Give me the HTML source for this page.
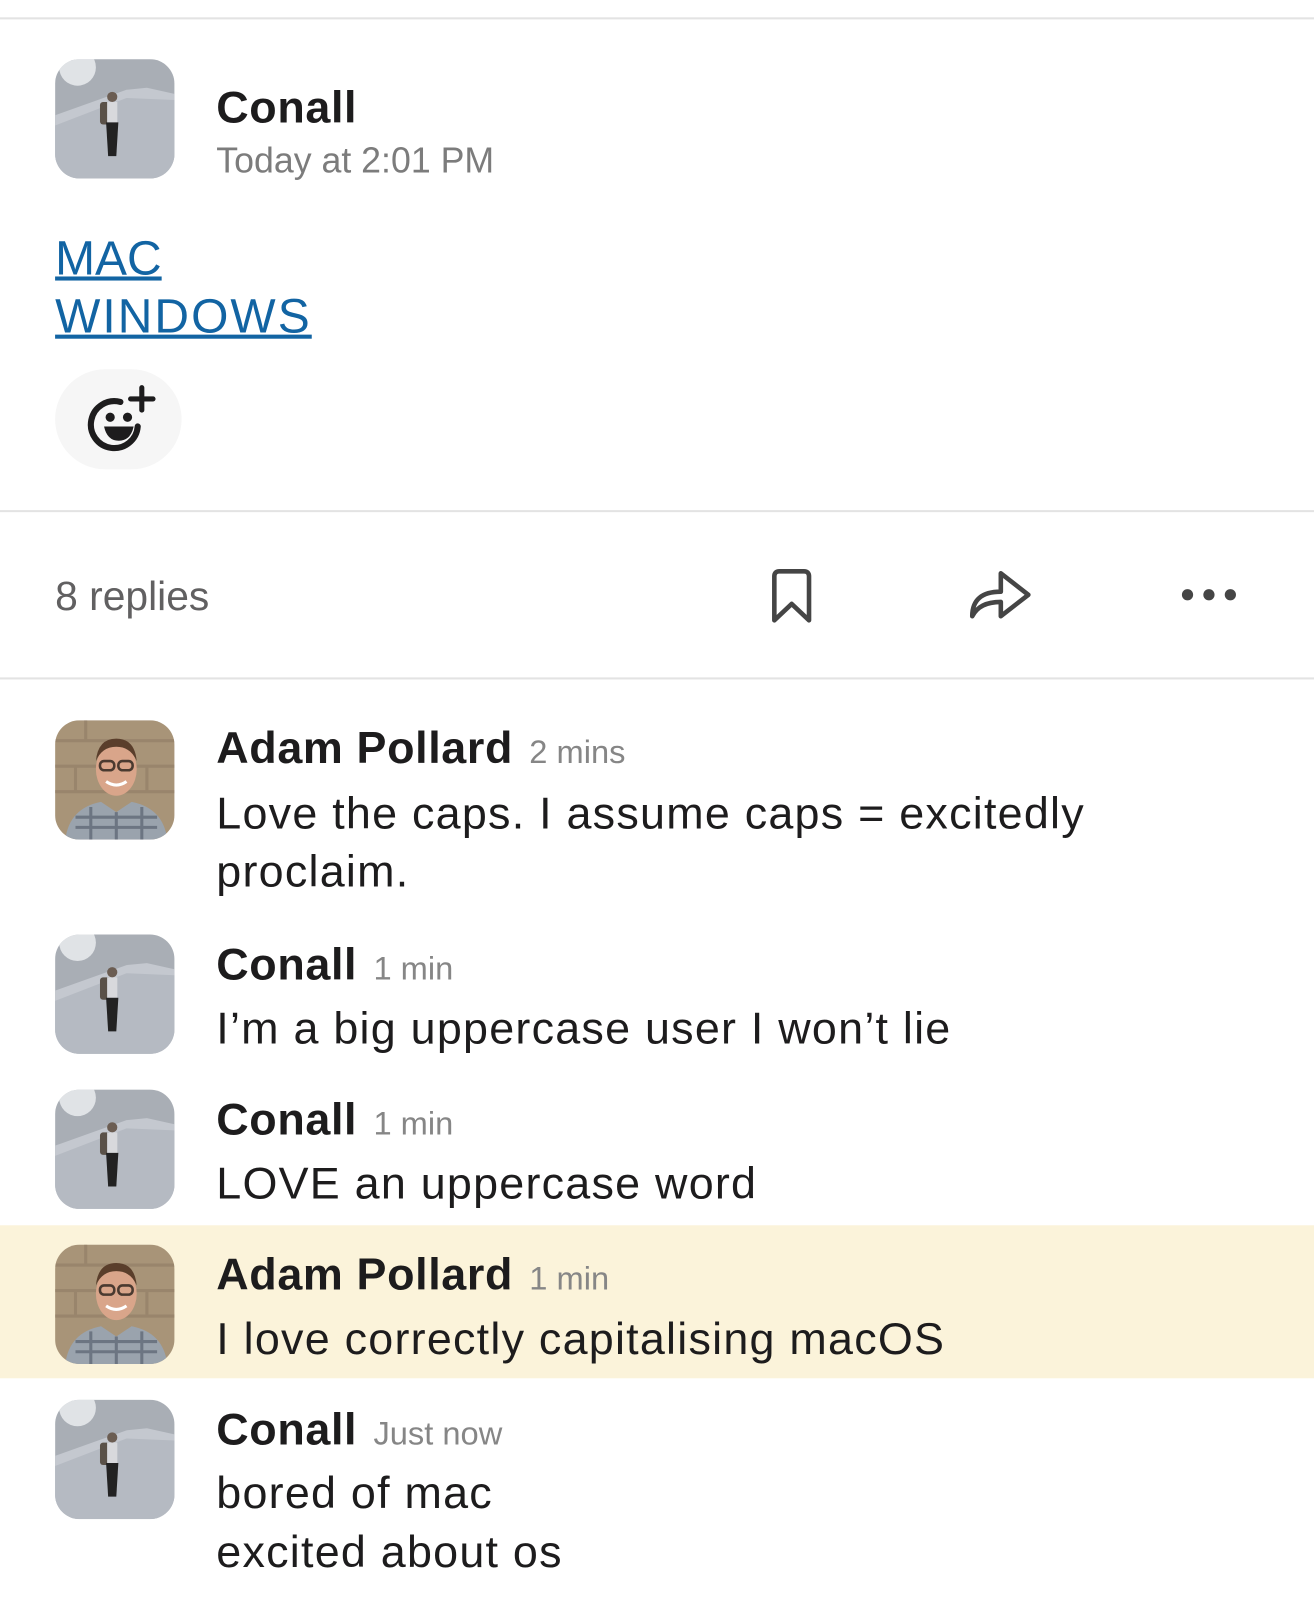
<!DOCTYPE html>
<html><head><meta charset="utf-8"><style>
html,body{margin:0;padding:0;background:#fff;}
body{width:1314px;height:1600px;overflow:hidden;position:relative;}
#w{position:absolute;left:0;top:0;width:1288px;height:1569px;transform:scale(1.0202);transform-origin:0 0;font-family:"Liberation Sans",sans-serif;color:#1d1c1d;}
.a{position:absolute;line-height:1;white-space:nowrap;}
.nm{font-size:44px;font-weight:bold;letter-spacing:0.6px;}
.tm{font-size:32px;color:#868686;margin-left:16px;font-weight:normal;letter-spacing:0;}
.tx{font-size:44px;letter-spacing:1.2px;}
.av{position:absolute;left:54px;width:117px;height:117px;border-radius:24px;overflow:hidden;}
.hr{position:absolute;left:0;width:1288px;height:2px;background:#e3e3e3;}
</style></head><body><div id="w">

<div class="hr" style="top:17px"></div>

<svg class="av" style="top:58px" viewBox="0 0 117 117"><rect width="117" height="117" fill="#a9aeb5"/><circle cx="22" cy="8" r="18" fill="#eef0f2" opacity=".8"/><path d="M0 55 L70 30 L90 28 L117 34 L117 117 L0 117Z" fill="#c4c8cf"/><path d="M0 65 L70 38 L117 40 L117 117 L0 117Z" fill="#b5bac2"/><rect x="44" y="42" width="12" height="22" rx="3" fill="#5a5148"/><rect x="51" y="42" width="10" height="22" fill="#d8d9dc"/><circle cx="56" cy="37" r="5" fill="#6b5d52"/><path d="M50 62 L62 62 L60 95 L52 95Z" fill="#222"/></svg>
<div class="a nm" style="left:212px;top:84px">Conall</div>
<div class="a" style="left:212px;top:140px;font-size:35px;color:#7c7c7c">Today at 2:01 PM</div>
<div class="a" style="left:54px;top:229px;font-size:47px;color:#1264a3;text-decoration:underline;text-decoration-thickness:4px">MAC</div>
<div class="a" style="left:54px;top:286px;font-size:47px;color:#1264a3;text-decoration:underline;text-decoration-thickness:4px;letter-spacing:2px">WINDOWS</div>
<div style="position:absolute;left:54px;top:362px;width:124px;height:98px;border-radius:49px;background:#f6f6f6"></div>
<svg style="position:absolute;left:80px;top:372px" width="76" height="76" viewBox="0 0 76 76"><path d="M55 46 A23 23 0 1 1 38 22" fill="none" stroke="#1d1c1d" stroke-width="6" stroke-linecap="round"/><circle cx="28" cy="37" r="4.5" fill="#1d1c1d"/><circle cx="45" cy="37" r="4.5" fill="#1d1c1d"/><path d="M22 46 H51 Q48 60 36.5 60 Q25 60 22 46Z" fill="#1d1c1d"/><path d="M59 8 V30 M48 19 H70" stroke="#1d1c1d" stroke-width="5" stroke-linecap="round"/></svg>

<div class="hr" style="top:500px"></div>
<div class="a" style="left:54px;top:565px;font-size:40px;color:#616061">8 replies</div>
<svg style="position:absolute;left:754px;top:556px" width="44" height="56" viewBox="0 0 44 56"><path d="M5 52 V9 Q5 4 10 4 H34 Q39 4 39 9 V52 L22 36 Z" fill="none" stroke="#454545" stroke-width="4.5" stroke-linejoin="round"/></svg>
<svg style="position:absolute;left:948px;top:556px" width="66" height="56" viewBox="0 0 66 56"><path d="M5 48 Q5 24 33 24 V6 L60 27 L33 48 V34 Q12 34 5 48Z" fill="none" stroke="#454545" stroke-width="4.5" stroke-linejoin="round"/></svg>
<svg style="position:absolute;left:1154px;top:572px" width="64" height="22" viewBox="0 0 64 22"><circle cx="10" cy="11" r="5.5" fill="#454545"/><circle cx="31" cy="11" r="5.5" fill="#454545"/><circle cx="52" cy="11" r="5.5" fill="#454545"/></svg>
<div class="hr" style="top:664px"></div>

<svg class="av" style="top:706px" viewBox="0 0 117 117"><rect width="117" height="117" fill="#a89478"/><path d="M0 20 H117 M0 45 H117 M0 70 H117 M30 0 V20 M70 20 V45 M20 45 V70 M90 45 V70" stroke="#8a7660" stroke-width="3" opacity=".5"/><ellipse cx="60" cy="48" rx="20" ry="26" fill="#d9a58a"/><path d="M40 40 Q42 18 60 18 Q78 18 80 40 Q74 26 60 26 Q46 26 40 40Z" fill="#5a3e2b"/><rect x="44" y="40" width="14" height="9" rx="4" fill="none" stroke="#4a3a30" stroke-width="2.5"/><rect x="62" y="40" width="14" height="9" rx="4" fill="none" stroke="#4a3a30" stroke-width="2.5"/><path d="M50 60 Q60 67 70 60" stroke="#fff" stroke-width="3" fill="none"/><path d="M10 117 Q14 86 45 80 L60 90 L75 80 Q106 86 110 117Z" fill="#9aa3ad"/><path d="M20 95 H100 M20 105 H100 M35 85 V117 M60 90 V117 M85 85 V117" stroke="#4f5866" stroke-width="3" opacity=".6"/></svg>
<div class="a nm" style="left:212px;top:712px">Adam Pollard<span class="tm">2 mins</span></div>
<div class="a tx" style="left:212px;top:776px">Love the caps. I assume caps = excitedly</div>
<div class="a tx" style="left:212px;top:833px">proclaim.</div>

<svg class="av" style="top:916px" viewBox="0 0 117 117"><rect width="117" height="117" fill="#a9aeb5"/><circle cx="22" cy="8" r="18" fill="#eef0f2" opacity=".8"/><path d="M0 55 L70 30 L90 28 L117 34 L117 117 L0 117Z" fill="#c4c8cf"/><path d="M0 65 L70 38 L117 40 L117 117 L0 117Z" fill="#b5bac2"/><rect x="44" y="42" width="12" height="22" rx="3" fill="#5a5148"/><rect x="51" y="42" width="10" height="22" fill="#d8d9dc"/><circle cx="56" cy="37" r="5" fill="#6b5d52"/><path d="M50 62 L62 62 L60 95 L52 95Z" fill="#222"/></svg>
<div class="a nm" style="left:212px;top:924px">Conall<span class="tm">1 min</span></div>
<div class="a tx" style="left:212px;top:987px">I’m a big uppercase user I won’t lie</div>

<svg class="av" style="top:1068px" viewBox="0 0 117 117"><rect width="117" height="117" fill="#a9aeb5"/><circle cx="22" cy="8" r="18" fill="#eef0f2" opacity=".8"/><path d="M0 55 L70 30 L90 28 L117 34 L117 117 L0 117Z" fill="#c4c8cf"/><path d="M0 65 L70 38 L117 40 L117 117 L0 117Z" fill="#b5bac2"/><rect x="44" y="42" width="12" height="22" rx="3" fill="#5a5148"/><rect x="51" y="42" width="10" height="22" fill="#d8d9dc"/><circle cx="56" cy="37" r="5" fill="#6b5d52"/><path d="M50 62 L62 62 L60 95 L52 95Z" fill="#222"/></svg>
<div class="a nm" style="left:212px;top:1076px">Conall<span class="tm">1 min</span></div>
<div class="a tx" style="left:212px;top:1139px">LOVE an uppercase word</div>

<div style="position:absolute;left:0;top:1201px;width:1288px;height:150px;background:#fbf3da"></div>
<svg class="av" style="top:1220px" viewBox="0 0 117 117"><rect width="117" height="117" fill="#a89478"/><path d="M0 20 H117 M0 45 H117 M0 70 H117 M30 0 V20 M70 20 V45 M20 45 V70 M90 45 V70" stroke="#8a7660" stroke-width="3" opacity=".5"/><ellipse cx="60" cy="48" rx="20" ry="26" fill="#d9a58a"/><path d="M40 40 Q42 18 60 18 Q78 18 80 40 Q74 26 60 26 Q46 26 40 40Z" fill="#5a3e2b"/><rect x="44" y="40" width="14" height="9" rx="4" fill="none" stroke="#4a3a30" stroke-width="2.5"/><rect x="62" y="40" width="14" height="9" rx="4" fill="none" stroke="#4a3a30" stroke-width="2.5"/><path d="M50 60 Q60 67 70 60" stroke="#fff" stroke-width="3" fill="none"/><path d="M10 117 Q14 86 45 80 L60 90 L75 80 Q106 86 110 117Z" fill="#9aa3ad"/><path d="M20 95 H100 M20 105 H100 M35 85 V117 M60 90 V117 M85 85 V117" stroke="#4f5866" stroke-width="3" opacity=".6"/></svg>
<div class="a nm" style="left:212px;top:1228px">Adam Pollard<span class="tm">1 min</span></div>
<div class="a tx" style="left:212px;top:1291px">I love correctly capitalising macOS</div>

<svg class="av" style="top:1372px" viewBox="0 0 117 117"><rect width="117" height="117" fill="#a9aeb5"/><circle cx="22" cy="8" r="18" fill="#eef0f2" opacity=".8"/><path d="M0 55 L70 30 L90 28 L117 34 L117 117 L0 117Z" fill="#c4c8cf"/><path d="M0 65 L70 38 L117 40 L117 117 L0 117Z" fill="#b5bac2"/><rect x="44" y="42" width="12" height="22" rx="3" fill="#5a5148"/><rect x="51" y="42" width="10" height="22" fill="#d8d9dc"/><circle cx="56" cy="37" r="5" fill="#6b5d52"/><path d="M50 62 L62 62 L60 95 L52 95Z" fill="#222"/></svg>
<div class="a nm" style="left:212px;top:1380px">Conall<span class="tm">Just now</span></div>
<div class="a tx" style="left:212px;top:1442px">bored of mac</div>
<div class="a tx" style="left:212px;top:1500px">excited about os</div>

</div></body></html>
